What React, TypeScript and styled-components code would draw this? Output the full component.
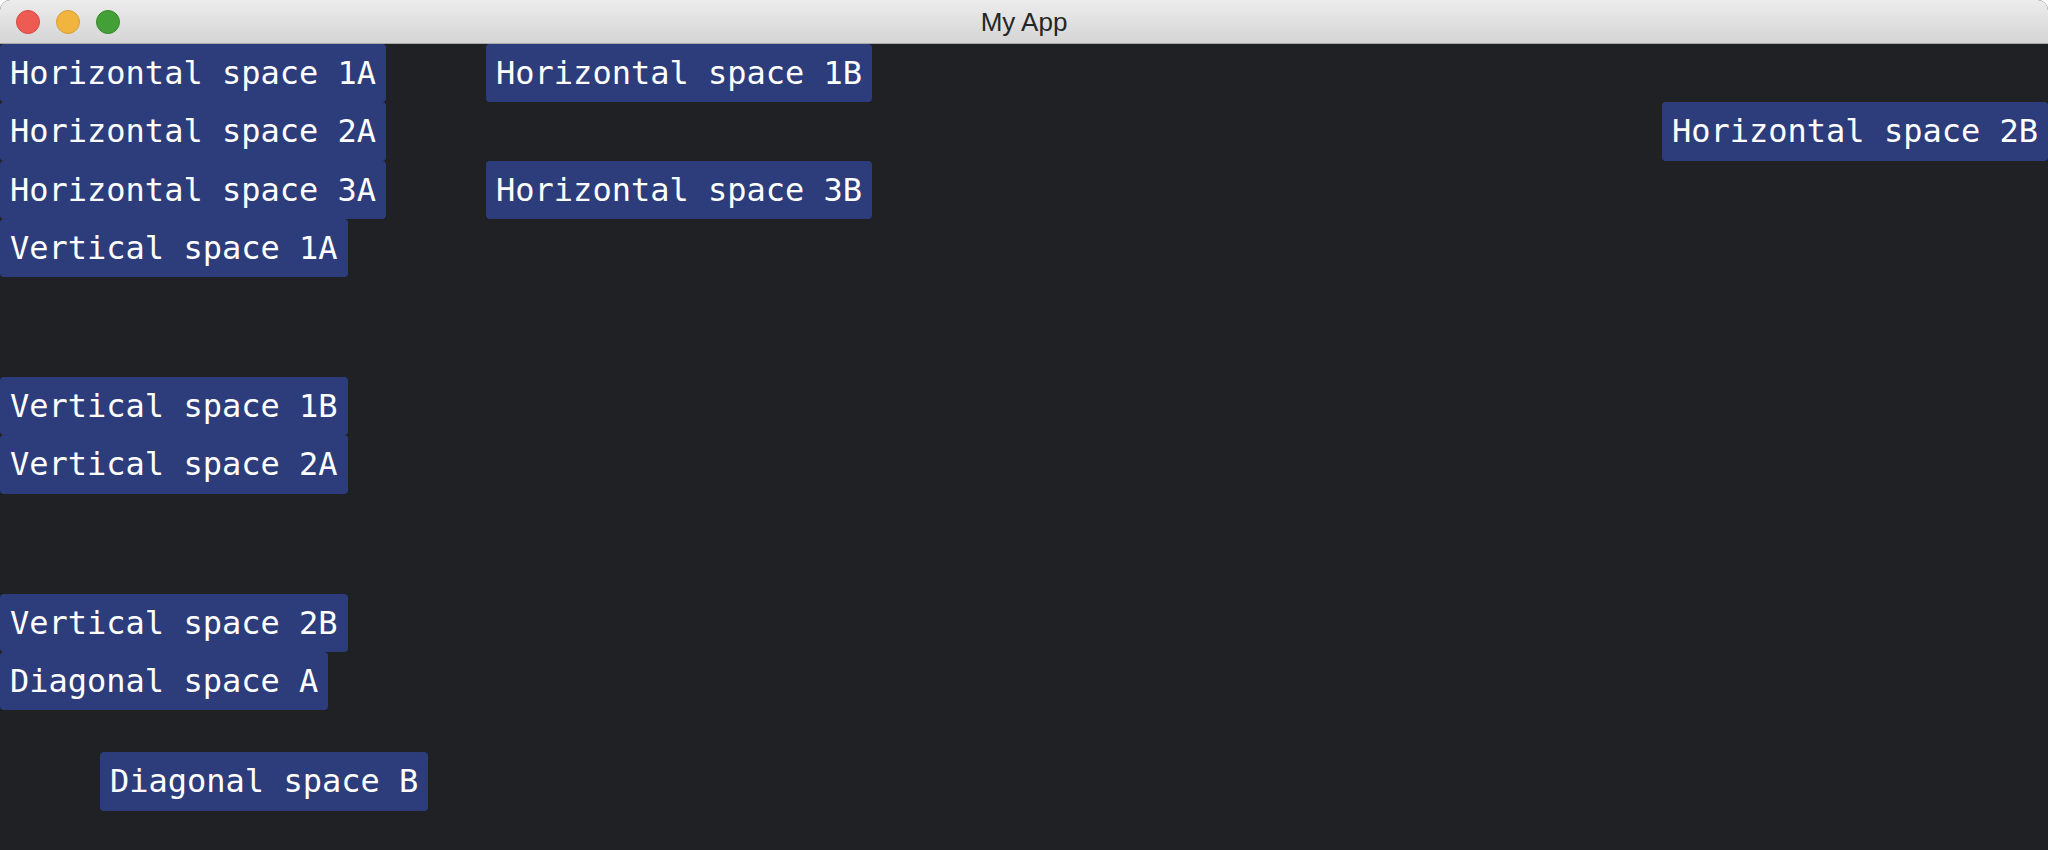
import React from "react";
import styled, { createGlobalStyle } from "styled-components";

const Global = createGlobalStyle`
  html, body { margin: 0; padding: 0; background: #ffffff; overflow: hidden; }
  #root { width: 2048px; height: 850px; }
`;

const Window = styled.div`
  width: 2048px;
  height: 850px;
  display: flex;
  flex-direction: column;
  border-radius: 10px 10px 0 0;
  overflow: hidden;
  background: #202125;
`;

const TitleBar = styled.div`
  position: relative;
  height: 43px;
  flex: 0 0 43px;
  display: flex;
  align-items: center;
  justify-content: center;
  background: linear-gradient(#ececec, #d5d5d5);
  border-bottom: 1px solid #a9a9a9;
`;

const Lights = styled.div`
  position: absolute;
  left: 16px;
  top: 10px;
  display: flex;
  gap: 16px;
`;

const Light = styled.span<{ $fill: string; $edge: string }>`
  width: 24px;
  height: 24px;
  border-radius: 50%;
  box-sizing: border-box;
  background: ${(p) => p.$fill};
  border: 1px solid ${(p) => p.$edge};
`;

const Title = styled.div`
  font-family: "Liberation Sans", Arial, sans-serif;
  font-size: 26px;
  color: #262626;
  padding-top: 2px;
`;

const Content = styled.div`
  flex: 1;
  display: flex;
  flex-direction: column;
  align-items: flex-start;
  background: #202125;
`;

const Row = styled.div`
  display: flex;
  align-self: stretch;
  align-items: flex-start;
`;

const Chip = styled.div`
  box-sizing: border-box;
  height: 58.3px;
  line-height: 58px;
  padding: 0 10px;
  font-family: "DejaVu Sans Mono", "Liberation Mono", monospace;
  font-size: 32px;
  color: #ffffff;
  white-space: pre;
  background: #2d3d7b;
  border-radius: 4px;
`;

const HSpace = styled.div<{ $w: number }>`
  flex: 0 0 ${(p) => p.$w}px;
`;

const Fill = styled.div`
  flex: 1;
`;

const VSpace = styled.div<{ $h: number }>`
  height: ${(p) => p.$h}px;
  flex: 0 0 ${(p) => p.$h}px;
`;

const Indent = styled.div<{ $x: number }>`
  padding-left: ${(p) => p.$x}px;
`;

export default function App() {
  return (
    <>
      <Global />
      <Window>
        <TitleBar>
          <Lights>
            <Light $fill="#ee5b52" $edge="#d44b42" />
            <Light $fill="#f0b43f" $edge="#d69e35" />
            <Light $fill="#43a036" $edge="#358a2a" />
          </Lights>
          <Title>My App</Title>
        </TitleBar>
        <Content>
          <Row>
            <Chip>Horizontal space 1A</Chip>
            <HSpace $w={100} />
            <Chip>Horizontal space 1B</Chip>
          </Row>
          <Row>
            <Chip>Horizontal space 2A</Chip>
            <Fill />
            <Chip>Horizontal space 2B</Chip>
          </Row>
          <Row>
            <Chip>Horizontal space 3A</Chip>
            <HSpace $w={100} />
            <Chip>Horizontal space 3B</Chip>
          </Row>
          <Chip>Vertical space 1A</Chip>
          <VSpace $h={100} />
          <Chip>Vertical space 1B</Chip>
          <Chip>Vertical space 2A</Chip>
          <VSpace $h={100} />
          <Chip>Vertical space 2B</Chip>
          <Chip>Diagonal space A</Chip>
          <VSpace $h={42} />
          <Indent $x={100}>
            <Chip>Diagonal space B</Chip>
          </Indent>
        </Content>
      </Window>
    </>
  );
}
